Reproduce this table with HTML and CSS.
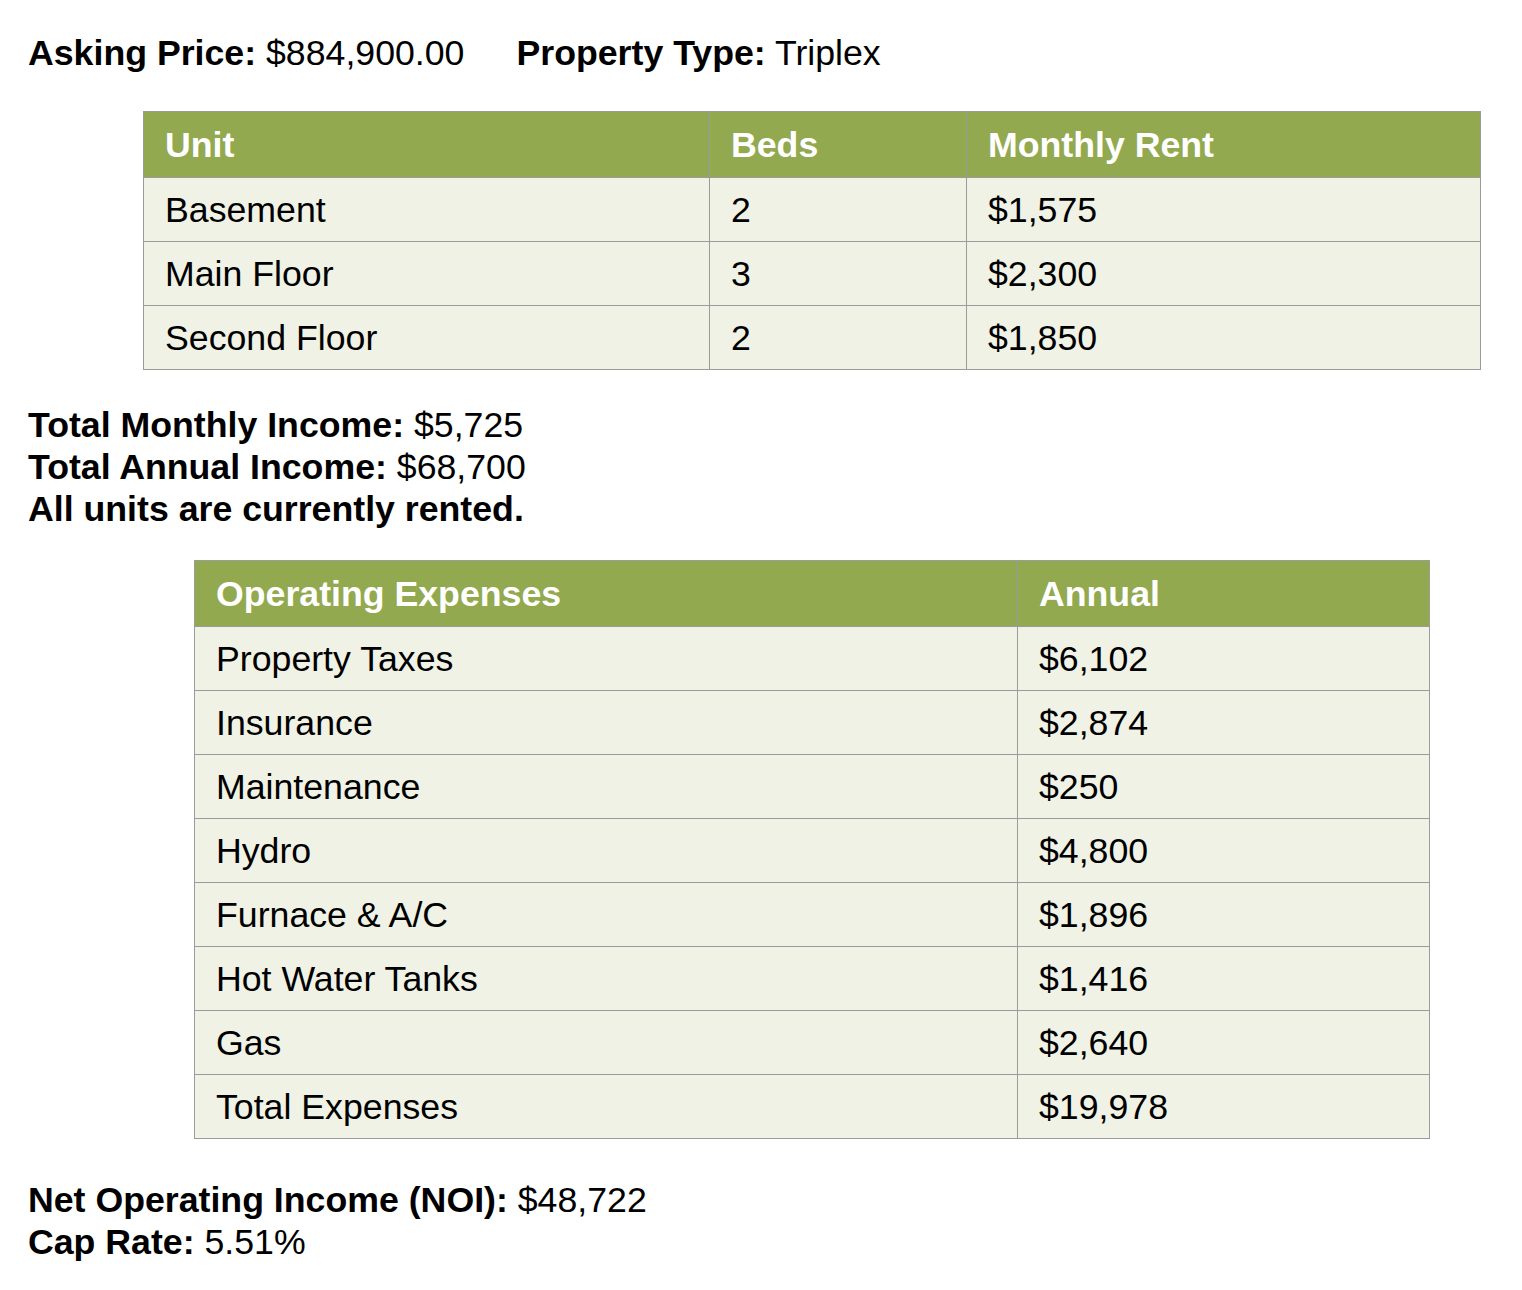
FILE: index.html
```html
<!DOCTYPE html>
<html>
<head>
<meta charset="utf-8">
<link rel="stylesheet" href="styles.css">
</head>
<body>
<div class="page">
  <p class="line top-line"><span class="item"><b>Asking Price:</b> $884,900.00</span><span class="item"><b>Property Type:</b> Triplex</span></p>

  <table class="grid units">
    <colgroup><col class="c-unit"><col class="c-beds"><col></colgroup>
    <thead><tr><th>Unit</th><th>Beds</th><th>Monthly Rent</th></tr></thead>
    <tbody>
      <tr><td>Basement</td><td>2</td><td>$1,575</td></tr>
      <tr><td>Main Floor</td><td>3</td><td>$2,300</td></tr>
      <tr><td>Second Floor</td><td>2</td><td>$1,850</td></tr>
    </tbody>
  </table>

  <div class="summary income">
    <p class="line"><b>Total Monthly Income:</b> $5,725</p>
    <p class="line"><b>Total Annual Income:</b> $68,700</p>
    <p class="line"><b>All units are currently rented.</b></p>
  </div>

  <table class="grid expenses">
    <colgroup><col class="c-exp"><col></colgroup>
    <thead><tr><th>Operating Expenses</th><th>Annual</th></tr></thead>
    <tbody>
      <tr><td>Property Taxes</td><td>$6,102</td></tr>
      <tr><td>Insurance</td><td>$2,874</td></tr>
      <tr><td>Maintenance</td><td>$250</td></tr>
      <tr><td>Hydro</td><td>$4,800</td></tr>
      <tr><td>Furnace &amp; A/C</td><td>$1,896</td></tr>
      <tr><td>Hot Water Tanks</td><td>$1,416</td></tr>
      <tr><td>Gas</td><td>$2,640</td></tr>
      <tr><td>Total Expenses</td><td>$19,978</td></tr>
    </tbody>
  </table>

  <div class="summary noi">
    <p class="line"><b>Net Operating Income (NOI):</b> $48,722</p>
    <p class="line"><b>Cap Rate:</b> 5.51%</p>
  </div>
</div>
</body>
</html>
```

FILE: styles.css
```css
html, body {
  margin: 0;
  padding: 0;
  background: #ffffff;
}
body {
  font-family: "Liberation Sans", Arial, Helvetica, sans-serif;
  font-size: 35.7px;
  color: #000000;
}
.page {
  padding: 32px 0 0 28px;
}
.line {
  margin: 0;
  line-height: 42px;
  white-space: nowrap;
}
.top-line {
  display: flex;
  gap: 52px;
}
b {
  font-weight: bold;
}
.grid {
  border-collapse: collapse;
  table-layout: fixed;
  background: #eff2e4;
  border: 1px solid #9b9b9b;
}
.grid th,
.grid td {
  text-align: left;
  padding: 0 21px;
  border: 1px solid #9b9b9b;
  line-height: 42px;
  white-space: nowrap;
}
.grid th {
  background: #93a94f;
  color: #ffffff;
  font-weight: bold;
  height: 65px;
}
.grid td {
  height: 63px;
  font-weight: normal;
}
.units {
  margin: 37px 0 0 115px;
  width: 1338px;
}
.c-unit { width: 566px; }
.c-beds { width: 257px; }
.income {
  margin-top: 34px;
}
.expenses {
  margin: 30px 0 0 166px;
  width: 1236px;
}
.c-exp { width: 823px; }
.noi {
  margin-top: 40px;
}
```
